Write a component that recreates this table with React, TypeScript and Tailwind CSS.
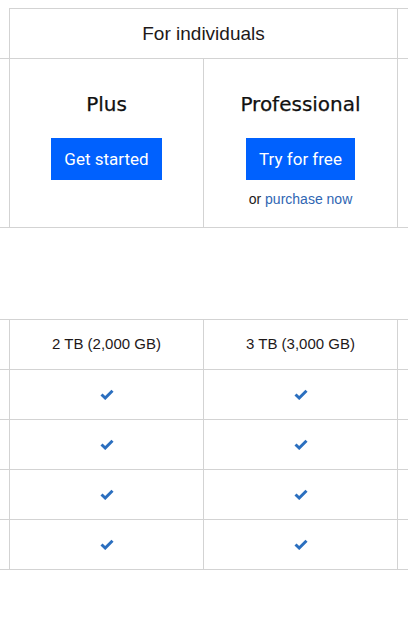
const Check = () => (
  <svg width="14" height="11" viewBox="0 0 14 11" fill="none">
    <path d="M1.5 5.5 L5.2 9 L12.5 1.8" stroke="#2b6fbf" strokeWidth="3" />
  </svg>
);

const rows = [
  ["2 TB (2,000 GB)", "3 TB (3,000 GB)"],
  ["check", "check"],
  ["check", "check"],
  ["check", "check"],
  ["check", "check"],
];

export default function App() {
  return (
    <div className="min-h-[619px] w-[408px] overflow-hidden bg-white text-[#1e1919]" style={{ fontFamily: "'Liberation Sans', Arial, sans-serif" }}>
      {/* Plan header table */}
      <div className="pt-2">
        <div className="grid grid-cols-[9px_388px_1fr] border-b border-[#d3d3d3]">
          <div />
          <div className="flex h-[50px] items-center justify-center border-l border-t border-[#d3d3d3] pt-[2px] text-[19px]">
            For individuals
          </div>
          <div className="border-l border-t border-[#d3d3d3]" />
        </div>
        <div className="grid h-[169px] grid-cols-[9px_194px_194px_1fr] border-b border-[#d3d3d3]">
          <div />
          <div className="flex flex-col items-center border-l border-[#d3d3d3] pt-[33px]">
            <h3 className="text-[20px] leading-6 text-[#111] [-webkit-text-stroke:0.25px_#111]" style={{ fontFamily: "'DejaVu Sans', sans-serif" }}>Plus</h3>
            <button className="mt-[22px] h-[42px] bg-[#0061fe] px-[13px] pt-[2px] text-[17px] text-white" style={{ fontFamily: "Roboto, sans-serif" }}>
              Get started
            </button>
          </div>
          <div className="flex flex-col items-center border-l border-[#d3d3d3] pt-[33px]">
            <h3 className="text-[20px] leading-6 text-[#111] [-webkit-text-stroke:0.25px_#111]" style={{ fontFamily: "'DejaVu Sans', sans-serif" }}>Professional</h3>
            <button className="mt-[22px] h-[42px] bg-[#0061fe] px-[13px] pt-[2px] text-[17px] text-white" style={{ fontFamily: "Roboto, sans-serif" }}>
              Try for free
            </button>
            <p className="mt-[9px] text-[14px]">
              or <a className="text-[#2f66b3]">purchase now</a>
            </p>
          </div>
          <div className="border-l border-[#d3d3d3]" />
        </div>
      </div>

      {/* Storage / features table */}
      <div className="mt-[91px] border-t border-[#d3d3d3]">
        {rows.map((r, i) => (
          <div key={i} className="grid h-[50px] grid-cols-[9px_194px_194px_1fr] border-b border-[#d3d3d3]">
            <div />
            {r.map((c, j) => (
              <div key={j} className="flex items-center justify-center border-l border-[#d3d3d3] text-[15px]">
                {c === "check" ? <Check /> : c}
              </div>
            ))}
            <div className="border-l border-[#d3d3d3]" />
          </div>
        ))}
      </div>
    </div>
  );
}
